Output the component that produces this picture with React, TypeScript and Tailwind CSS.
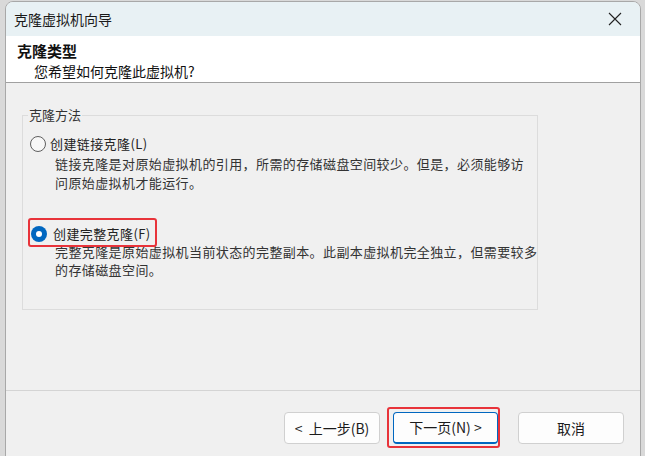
import React from "react";

const cjk = "font-['Segoe_UI','Noto_Sans_CJK_SC',sans-serif]";

const Radio: React.FC<{ checked?: boolean }> = ({ checked }) =>
  checked ? (
    <span className="flex h-[16px] w-[16px] items-center justify-center rounded-full bg-[#0067c0]">
      <span className="h-[6px] w-[6px] rounded-full bg-white" />
    </span>
  ) : (
    <span className="h-[16px] w-[16px] rounded-full border border-[#5f5f5f] bg-[#f7f7f7]" />
  );

const Button: React.FC<{ label: string; focused?: boolean; className?: string }> = ({
  label,
  focused,
  className,
}) => (
  <div
    className={`flex h-[32px] items-center justify-center rounded-[4px] bg-[#fdfdfd] text-[14px] text-[#1b1b1b] ${
      focused ? "border border-[#0067c0] border-b-2" : "border border-[#d0d0d0]"
    } ${className ?? "w-[96px]"}`}
  >
    {label}
  </div>
);

export default function App() {
  return (
    <div className={`h-[456px] w-[645px] overflow-hidden bg-[#d9d9d9] pl-[5px] pt-[1px] ${cjk}`}>
      <div className="flex h-[460px] w-[636px] flex-col overflow-hidden rounded-t-[8px] border border-[#a8a8a8] bg-[#f0f0f0]">
        {/* title bar */}
        <div className="flex h-[34px] shrink-0 items-center justify-between bg-[#e8f1f4] pl-[8px] pr-[18px]">
          <span className="text-[14px] text-[#1a1a1a]">克隆虚拟机向导</span>
          <svg width="14" height="14" viewBox="0 0 14 14" className="text-[#222]">
            <path d="M1 1 L13 13 M13 1 L1 13" stroke="currentColor" strokeWidth="1.1" />
          </svg>
        </div>

        {/* header */}
        <div className="flex h-[47px] shrink-0 flex-col border-b border-[#a0a0a0] bg-white pl-[11px] pt-[5px] leading-[20px] text-[#111]">
          <span className="text-[15px] font-bold">克隆类型</span>
          <span className="pl-[17px] text-[14px]">您希望如何克隆此虚拟机?</span>
        </div>

        {/* body */}
        <div className="flex flex-1 flex-col">
          <div className="h-[307px] shrink-0 pl-[16px] pt-[32px]">
            <div className="relative h-[195px] w-[516px] border border-[#dcdcdc] pl-[7px] pt-[19px] text-[13px] text-[#222]">
              <span className="absolute -top-[10px] left-[5px] bg-[#f0f0f0] px-[1px] leading-[18px] text-[#333]">
                克隆方法
              </span>

              <div className="flex items-center gap-[4px] leading-[18px]">
                <Radio />
                <span className="tracking-[0.4px]">创建链接克隆(L)</span>
              </div>
              <div className="whitespace-nowrap pl-[25px] pt-[1px] leading-[19px] tracking-[0.4px] text-[#333]">
                链接克隆是对原始虚拟机的引用，所需的存储磁盘空间较少。但是，必须能够访
                <br />
                问原始虚拟机才能运行。
              </div>

              <div className="relative mt-[33px] flex items-center gap-[6px] pl-[1px] leading-[18px]">
                <Radio checked />
                <span className="tracking-[0.4px]">创建完整克隆(F)</span>
                <span className="absolute -left-[2px] -top-[7px] h-[29px] w-[129px] rounded-[3px] border-2 border-[#e8333a]" />
              </div>
              <div className="whitespace-nowrap pl-[25px] leading-[18px] tracking-[0.4px] text-[#333]">
                完整克隆是原始虚拟机当前状态的完整副本。此副本虚拟机完全独立，但需要较多
                <br />
                的存储磁盘空间。
              </div>
            </div>
          </div>

          <div className="border-t border-[#d4d4d4]" />

          <div className="flex items-start pl-[278px] pt-[21px]">
            <Button label="<  上一步(B)" className="w-[96px] whitespace-pre" />
            <div className="ml-[7px] mt-[-5px] flex h-[41px] w-[113px] items-center rounded-[3px] border-2 border-[#e8333a] pl-[4px]">
              <Button label="下一页(N) >" focused className="w-[106px]" />
            </div>
            <Button label="取消" className="ml-[18px] w-[106px]" />
          </div>
        </div>
      </div>
    </div>
  );
}
